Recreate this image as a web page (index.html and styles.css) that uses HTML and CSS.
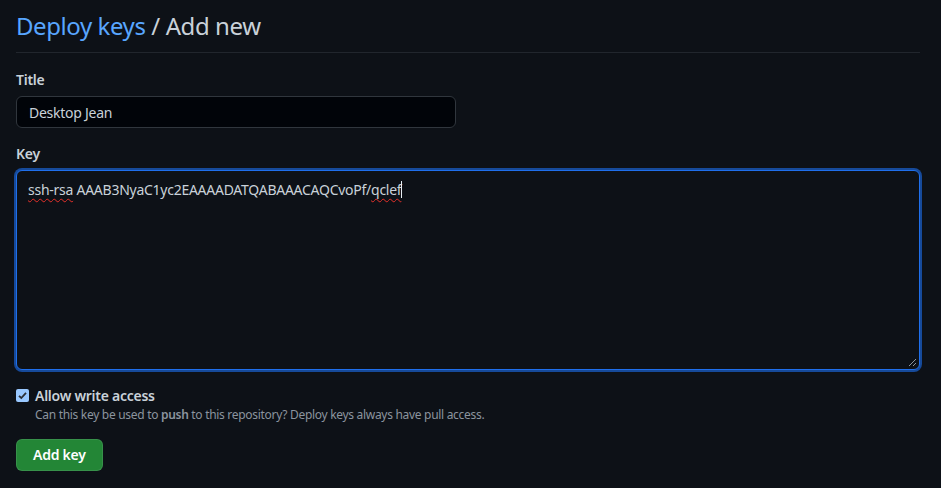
FILE: index.html
```html
<!DOCTYPE html>
<html lang="en">
<head>
<meta charset="utf-8">
<title>Deploy keys / Add new</title>
<link rel="stylesheet" href="styles.css">
</head>
<body>
<div class="page">
  <div class="subhead">
    <h2 class="subhead-heading"><a class="crumb" href="#">Deploy keys</a> / Add new</h2>
  </div>
  <form class="form">
    <div class="form-group">
      <label class="label">Title</label>
      <div class="input">Desktop Jean</div>
    </div>
    <div class="form-group">
      <label class="label">Key</label>
      <div class="textarea"><span class="spell">ssh-rsa</span> AAAB3NyaC1yc2EAAAADATQABAAACAQCvoPf/<span class="spell">qclef</span><span class="caret"></span>
        <svg class="grip" width="9" height="9" viewBox="0 0 9 9"><path d="M8 1L1 8M8 5L5 8" stroke="#8b949e" stroke-width="1"/></svg>
      </div>
    </div>
    <div class="checkbox">
      <div class="check-row">
        <span class="box"><svg width="13" height="13" viewBox="0 0 13 13"><path d="M3 6.8L5.3 9L10 3.8" fill="none" stroke="#2b2f36" stroke-width="1.8"/></svg></span>
        <span class="check-label">Allow write access</span>
      </div>
      <p class="note">Can this key be used to <strong>push</strong> to this repository? Deploy keys always have pull access.</p>
    </div>
    <button type="button" class="btn">Add key</button>
  </form>
</div>
</body>
</html>
```
FILE: styles.css
```css
* { box-sizing: border-box; }
html, body { margin: 0; padding: 0; background: #0d1117; }
body {
  font-family: "Noto Sans", "Open Sans", "Liberation Sans", sans-serif;
  color: #c9d1d9;
  font-size: 14px;
  line-height: 1.5;
  letter-spacing: -0.26px;
}
.page { width: 904px; margin: 0 0 0 16px; padding-top: 8px; }
.subhead { border-bottom: 1px solid #21262d; padding-bottom: 8px; margin-bottom: 16px; }
.subhead-heading { margin: 0; font-size: 24px; font-weight: 400; line-height: 36px; color: #c9d1d9; letter-spacing: -0.42px; }
.crumb { color: #58a6ff; text-decoration: none; }
.form-group { display: flex; flex-direction: column; margin-bottom: 15px; }
.label { font-weight: 600; margin-bottom: 6px; line-height: 21px; }
.input {
  width: 440px; height: 32px; padding: 0 12px;
  background: #010409; border: 1px solid #30363d; border-radius: 6px;
  display: flex; align-items: center;
}
.textarea {
  position: relative;
  height: 200px; padding: 8px 11px;
  border: 1px solid #1f6feb; border-radius: 6px;
  box-shadow: 0 0 0 2px #164a9a;
  background: #0d1117;
  white-space: pre;
}
.spell { text-decoration: underline wavy #e5302a; text-decoration-thickness: 1px; text-underline-offset: 3px; }
.caret { display: inline-block; width: 1px; height: 17px; background: #e6edf3; vertical-align: -3px; }
.grip { position: absolute; right: 2px; bottom: 2px; }
.checkbox { margin-bottom: 15px; }
.check-row { display: flex; align-items: center; gap: 6px; line-height: 21px; margin-top: 15px; }
.box {
  width: 13px; height: 13px; border-radius: 2px; background: #99c8ff;
  display: flex; align-items: center; justify-content: center;
}
.box svg { display: block; }
.check-label { font-weight: 600; }
.note { margin: 0 0 0 19px; font-size: 12px; color: #8b949e; line-height: 18px; letter-spacing: -0.3px; }
.note strong { font-weight: 600; }
.btn {
  font-family: inherit; font-size: 14px; font-weight: 600; line-height: 20px;
  letter-spacing: -0.26px;
  color: #ffffff; background: #238636;
  border: 1px solid rgba(240, 246, 252, 0.1); border-radius: 6px;
  padding: 5px 16px;
}
```
